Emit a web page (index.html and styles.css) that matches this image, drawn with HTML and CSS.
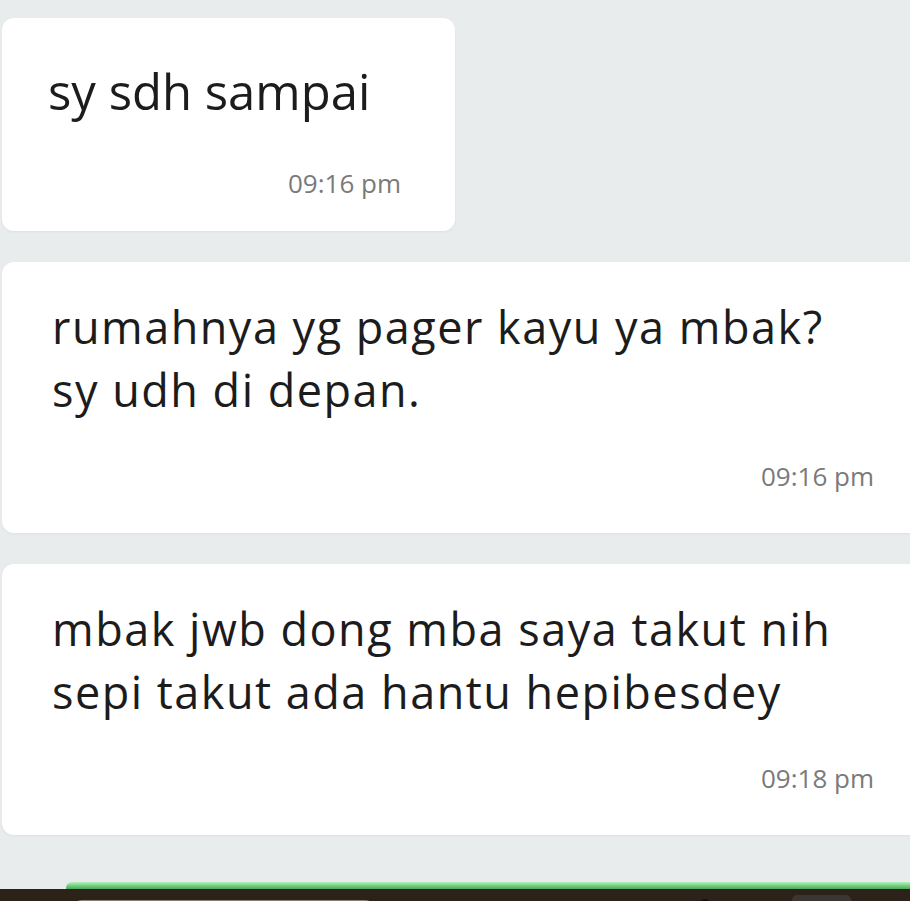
FILE: index.html
```html
<!DOCTYPE html>
<html>
<head>
<meta name="viewport" content="width=device-width, initial-scale=1.0" charset="UTF-8">
<link rel="stylesheet" href="styles.css">
</head>
<body>
<div class="chat">
	<div class="bubble bubble-short">
		<div class="text big">sy sdh sampai</div>
		<div class="time">09:16 pm</div>
	</div>
	<div class="bubble bubble-wide">
		<div class="text">rumahnya yg pager kayu ya mbak?<br>sy udh di depan.</div>
		<div class="time">09:16 pm</div>
	</div>
	<div class="bubble bubble-wide">
		<div class="text">mbak jwb dong mba saya takut nih<br>sepi takut ada hantu hepibesdey</div>
		<div class="time">09:18 pm</div>
	</div>
</div>

<div class="footer">
	<div class="green-line"></div>
	<div class="dark-bar">
		<div class="pill"></div>
		<div class="spacer"></div>
		<div class="dot"></div>
		<div class="btn"></div>
	</div>
</div>
</body>
</html>
```

FILE: styles.css
```css
body {
	margin: 0;
	font-family: 'Open Sans', 'Noto Sans', sans-serif;
	background-color: #e8ecec;
	color: #1c1c1c;
	overflow: hidden;
	height: 901px;
}

.chat {
	display: flex;
	flex-direction: column;
	gap: 31px;
	padding-top: 18px;
	padding-left: 2px;
}

.bubble {
	background: #ffffff;
	border-radius: 12px;
	box-shadow: 0 1px 3px rgba(0, 0, 0, 0.05);
	padding: 33px 50px 42px 50px;
	display: flex;
	flex-direction: column;
}

.bubble-short {
	width: 453px;
	box-sizing: border-box;
	padding: 41px 54px 33px 46px;
}

.bubble-wide {
	margin-right: -14px;
}

.text {
	font-size: 45px;
	line-height: 63px;
	letter-spacing: 1.5px;
}

.text.big {
	font-size: 49px;
	line-height: 64px;
	letter-spacing: 0;
}

.time {
	align-self: flex-end;
	font-size: 26px;
	line-height: 30px;
	color: #7a7a7a;
	margin-top: 40px;
}

.bubble-short .time {
	margin-top: 45px;
}

.footer {
	margin-top: 47px;
}

.green-line {
	margin-left: 66px;
	height: 7px;
	border-radius: 6px 0 0 0;
	background: linear-gradient(#b8f0c0, #7fd98d 40%, #4fa85c);
}

.dark-bar {
	height: 20px;
	background: #2b2219;
	display: flex;
	align-items: flex-start;
	padding-left: 72px;
	padding-right: 59px;
}

.pill {
	width: 303px;
	height: 20px;
	margin-top: 11px;
	border: 2px solid #8a8070;
	border-radius: 10px;
	box-sizing: border-box;
}

.spacer {
	flex: 1;
}

.dot {
	width: 10px;
	height: 10px;
	margin-top: 10px;
	border-radius: 50%;
	background: #111;
	margin-right: 82px;
}

.btn {
	width: 59px;
	height: 20px;
	margin-top: 6px;
	border-radius: 5px;
	background: #3b3631;
}
```
